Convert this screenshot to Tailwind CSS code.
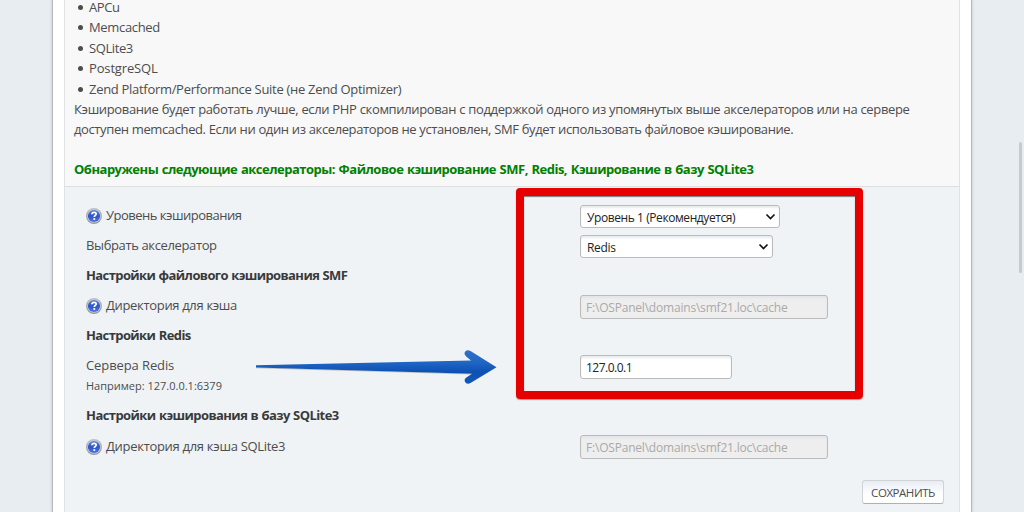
<!DOCTYPE html>
<html lang="ru">
<head>
<meta charset="utf-8">
<title>Кэширование</title>
<script src="https://cdn.jsdelivr.net/npm/@tailwindcss/browser@4"></script>
</head>
<body class="relative h-[512px] overflow-hidden bg-[#e8edf1] font-['Open_Sans','Noto_Sans',sans-serif] text-[13px] text-[#4d4d4d]">
<svg class="absolute size-0">
  <defs>
    <linearGradient id="ring" x1="0" y1="0" x2="0" y2="1"><stop offset="0" stop-color="#bfc1c4"/><stop offset="1" stop-color="#94979b"/></linearGradient>
    <linearGradient id="ball" x1="0" y1="0" x2="0" y2="1"><stop offset="0" stop-color="#5b83dd"/><stop offset=".5" stop-color="#3054cb"/><stop offset="1" stop-color="#4b74e6"/></linearGradient>
    <symbol id="help" viewBox="0 0 16 16">
      <circle cx="8" cy="8" r="8" fill="url(#ring)"/>
      <circle cx="8" cy="8" r="6.600" fill="#d4d8e0"/>
      <circle cx="8" cy="8" r="6.1" fill="url(#ball)"/>
      <path d="M5.9 6.3C6 4.9 7 4.3 8.1 4.3c1.2 0 2.1.7 2.1 1.7 0 1.4-1.9 1.4-1.9 3" fill="none" stroke="#fff" stroke-width="1.7"/>
      <rect x="7.4" y="10.1" width="1.8" height="1.8" fill="#fff"/>
    </symbol>
  </defs>
</svg>
<div class="ml-[52px] h-[512px] w-[920px] border-x border-[#b8b8b8] bg-white px-[11px] shadow-[0_0_3px_rgba(0,0,0,0.18)]">
  <div class="h-full w-[896px] border-x border-[#e0e2e4] bg-[#eff3f6]">
    <div class="h-[187px] overflow-hidden border-b border-[#dddfe1] bg-[#f8f8f8] pl-[9px] leading-[20.25px] whitespace-nowrap">
      <ul class="-mt-[3px]">
        <li class="flex items-center gap-[6px] pl-[4px]"><i class="mt-px size-[5px] rounded-full bg-[#4d4d4d]"></i><span class="tracking-[-0.4px]">APCu</span></li>
        <li class="flex items-center gap-[6px] pl-[4px]"><i class="mt-px size-[5px] rounded-full bg-[#4d4d4d]"></i><span class="tracking-[-0.33px]">Memcached</span></li>
        <li class="flex items-center gap-[6px] pl-[4px]"><i class="mt-px size-[5px] rounded-full bg-[#4d4d4d]"></i><span class="tracking-[-0.4px]">SQLite3</span></li>
        <li class="flex items-center gap-[6px] pl-[4px]"><i class="mt-px size-[5px] rounded-full bg-[#4d4d4d]"></i><span class="tracking-[-0.15px]">PostgreSQL</span></li>
        <li class="flex items-center gap-[6px] pt-[0.5px] pl-[4px]"><i class="mt-px size-[5px] rounded-full bg-[#4d4d4d]"></i><span class="tracking-[-0.3px]">Zend Platform/Performance Suite (не Zend Optimizer)</span></li>
      </ul>
      <p><span class="tracking-[-0.36px] [word-spacing:0.16px]">Кэширование будет работать лучше, если PHP скомпилирован с поддержкой одного из упомянутых выше акселераторов или на сервере</span><br><span class="tracking-[-0.385px] [word-spacing:0.15px]">доступен memcached. Если ни один из акселераторов не установлен, SMF будет использовать файловое кэширование.</span></p>
      <p class="mt-[19.5px] font-bold text-[#008000]"><span class="tracking-[-0.5px] [word-spacing:0.7px]">Обнаружены следующие акселераторы: Файловое кэширование SMF, Redis, Кэширование в базу SQLite3</span></p>
    </div>
    <div class="pt-[13px] pl-[21px] leading-[20px] whitespace-nowrap">
      <div class="flex h-[30px]"><div class="flex w-[494px] pt-[5px]"><svg class="mt-[3px] mr-[4px] size-[16px]"><use href="#help"/></svg><span class="tracking-[-0.5px]">Уровень кэширования</span></div>
        <div class="mt-[5px] flex h-[23px] w-[200px] items-center justify-between rounded-[3px] border border-[#bbb] bg-white pt-[2px] pr-[3px] pl-[6px] text-[12px] text-[#222] shadow-[inset_0_2px_2px_#e8ebef]"><span class="tracking-[-0.42px]">Уровень 1 (Рекомендуется)</span><svg class="mb-px h-[8px] w-[11px]" viewBox="0 0 11 8"><path d="M1.5 1.5l4 4 4-4" fill="none" stroke="#111" stroke-width="1.6"/></svg></div></div>
      <div class="flex h-[30px]"><div class="w-[494px] pt-[5px]"><span class="tracking-[-0.37px]">Выбрать акселератор</span></div>
        <div class="mt-[5px] flex h-[23px] w-[193px] items-center justify-between rounded-[3px] border border-[#bbb] bg-white pt-[2px] pr-[3px] pl-[6px] text-[12px] text-[#222] shadow-[inset_0_2px_2px_#e8ebef]"><span class="tracking-[-0.3px]">Redis</span><svg class="mb-px h-[8px] w-[11px]" viewBox="0 0 11 8"><path d="M1.5 1.5l4 4 4-4" fill="none" stroke="#111" stroke-width="1.6"/></svg></div></div>
      <div class="h-[30px] pt-[5px] font-bold text-[#3a3a3a]"><span class="tracking-[-0.6px] [word-spacing:0.5px]">Настройки файлового кэширования SMF</span></div>
      <div class="flex h-[30px]"><div class="flex w-[494px] pt-[5px]"><svg class="mt-[3px] mr-[4px] size-[16px]"><use href="#help"/></svg><span class="tracking-[-0.33px]">Директория для кэша</span></div>
        <div class="mt-[5px] flex h-[24px] w-[248px] items-center rounded-[3px] border border-[#bbb] bg-[#eee] pt-px pl-[5px] text-[12px] text-[#aaa] shadow-[inset_0_2px_2px_#e2e5e9]"><span class="tracking-[-0.2px]">F:\OSPanel\domains\smf21.loc\cache</span></div></div>
      <div class="h-[30px] pt-[5px] font-bold text-[#3a3a3a]"><span class="tracking-[-0.6px] [word-spacing:0.6px]">Настройки Redis</span></div>
      <div class="flex h-[50px]"><div class="w-[494px] pt-[5px]"><span class="tracking-[-0.1px]">Сервера Redis</span><br><span class="text-[11px]">Например: 127.0.0.1:6379</span></div>
        <div class="mt-[5px] flex h-[24px] w-[152px] items-center rounded-[3px] border border-[#bbb] bg-white pt-px pl-[5px] text-[12px] text-[#222] shadow-[inset_0_2px_2px_#e8ebef]"><span class="tracking-[-0.5px]">127.0.0.1</span></div></div>
      <div class="h-[30px] pt-[5px] font-bold text-[#3a3a3a]"><span class="tracking-[-0.57px] [word-spacing:0.5px]">Настройки кэширования в базу SQLite3</span></div>
      <div class="flex h-[30px]"><div class="flex w-[494px] pt-[6px]"><svg class="mt-[3px] mr-[4px] size-[16px]"><use href="#help"/></svg><span class="tracking-[-0.3px]">Директория для кэша SQLite3</span></div>
        <div class="mt-[5px] flex h-[24px] w-[248px] items-center rounded-[3px] border border-[#bbb] bg-[#eee] pt-[2px] pl-[5px] text-[12px] text-[#aaa] shadow-[inset_0_2px_2px_#e2e5e9]"><span class="tracking-[-0.2px]">F:\OSPanel\domains\smf21.loc\cache</span></div></div>
      <div class="mt-[20px] ml-[776px] flex h-[24px] w-[82px] items-center justify-center rounded-[3px] border border-[#d0d2d4] border-b-[#aeb0b2] bg-linear-to-b from-[#e8edf5] to-white to-60% pt-px text-[11.5px]"><span class="tracking-[-0.45px]">СОХРАНИТЬ</span></div>
    </div>
  </div>
</div>
<div class="absolute top-[188px] left-[516px] h-[211px] w-[347px] rounded-[4px] border-8 border-[#e60000] shadow-[0_1px_1px_rgba(0,0,0,0.35),inset_0_1px_1px_rgba(0,0,0,0.5)]"></div>
<svg class="absolute top-[345px] left-[250px]" width="255" height="45" viewBox="250 345 255 45">
  <defs><linearGradient id="arrow" gradientUnits="userSpaceOnUse" x1="0" y1="352" x2="0" y2="383"><stop offset="0" stop-color="#2b70c9"/><stop offset=".35" stop-color="#1f65c4"/><stop offset=".65" stop-color="#0d50b4"/><stop offset="1" stop-color="#1158b8"/></linearGradient></defs>
  <path d="M256 365.3L471 360.5L466.500 356.700Q463 353.500 465.500 351.200Q467.500 349.300 470.500 351L496.500 367.200L470.500 383Q467.500 384.800 465.500 382.500Q463.500 380 466 377.800L472 373.700L256 367.600Z" fill="url(#arrow)"/>
  <path d="M256 367.800L471 374" stroke="#555" stroke-opacity=".5" stroke-width=".6"/>
</svg>
<div class="absolute top-[142px] right-[2px] h-[131px] w-[3px] rounded-full bg-[#c8cacc]"></div>
</body>
</html>
